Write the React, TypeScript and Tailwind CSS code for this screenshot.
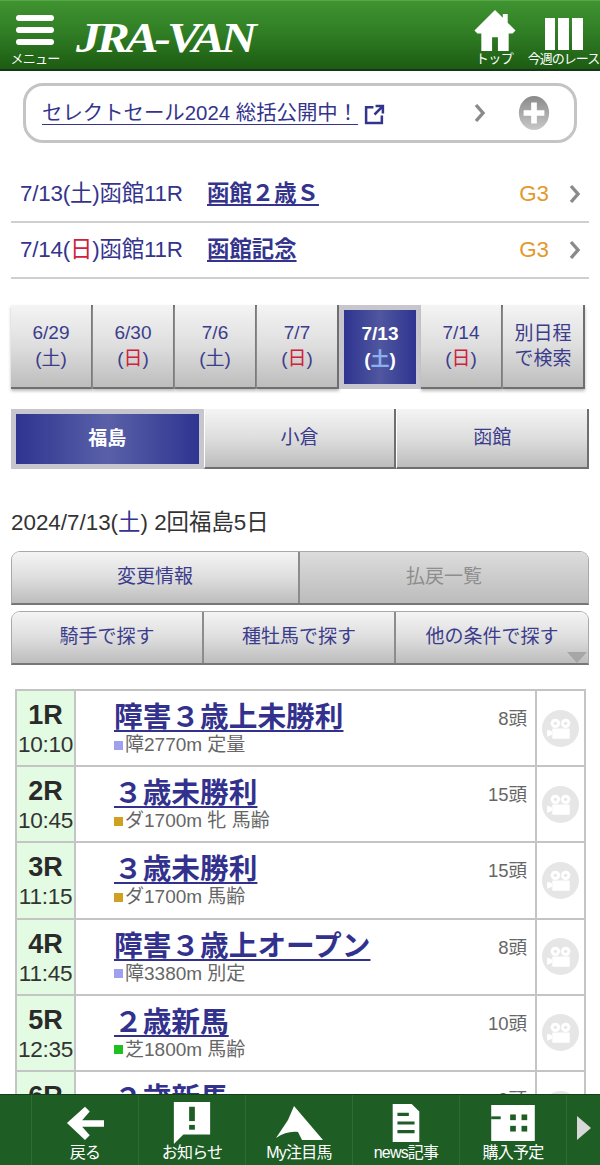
import React from 'react';

const FONT = 'font-["Liberation_Sans","Noto_Sans_CJK_JP",sans-serif]';

const dates = [
  { d: '6/29', w: '土' },
  { d: '6/30', w: '日' },
  { d: '7/6', w: '土' },
  { d: '7/7', w: '日' },
  { d: '7/13', w: '土', active: true },
  { d: '7/14', w: '日' },
];

const races = [
  { no: '1R', time: '10:10', title: '障害３歳上未勝利', info: '障2770m 定量', head: '8頭', mark: 'bg-[#a0a0f0]' },
  { no: '2R', time: '10:45', title: '３歳未勝利', info: 'ダ1700m 牝 馬齢', head: '15頭', mark: 'bg-[#d0a020]' },
  { no: '3R', time: '11:15', title: '３歳未勝利', info: 'ダ1700m 馬齢', head: '15頭', mark: 'bg-[#d0a020]' },
  { no: '4R', time: '11:45', title: '障害３歳上オープン', info: '障3380m 別定', head: '8頭', mark: 'bg-[#a0a0f0]' },
  { no: '5R', time: '12:35', title: '２歳新馬', info: '芝1800m 馬齢', head: '10頭', mark: 'bg-[#20c020]' },
  { no: '6R', time: '13:05', title: '２歳新馬', info: '芝1200m 馬齢', head: '9頭', mark: 'bg-[#20c020]' },
];

const btn = 'bg-gradient-to-b from-[#f4f4f4] via-[#dedede] to-[#bdbdbd]';

function Chevron({ className = '' }: { className?: string }) {
  return (
    <svg viewBox="0 0 12 20" className={className}>
      <path d="M2 2l7 8-7 8" fill="none" stroke="#8a8a8a" strokeWidth="3.4" />
    </svg>
  );
}

function CameraBadge() {
  return (
    <svg viewBox="0 0 36 36" className="w-[37px] h-[37px]">
      <circle cx="18" cy="18" r="18" fill="#e6e6e6" />
      <circle cx="13" cy="13" r="4.6" fill="#fff" />
      <circle cx="23" cy="13" r="4.6" fill="#fff" />
      <circle cx="13" cy="13" r="1.6" fill="#e6e6e6" />
      <circle cx="23" cy="13" r="1.6" fill="#e6e6e6" />
      <rect x="10" y="18" width="17" height="10" rx="1" fill="#fff" />
      <path d="M10 21l-5-2v7l5-2z" fill="#fff" />
    </svg>
  );
}

function Header() {
  return (
    <header className="h-[71px] shrink-0 flex items-stretch bg-gradient-to-b from-[#3f9330] via-[#2f7c24] to-[#1c5c12] border-t border-[#57a845] border-b-2 border-b-[#17351a] text-white">
      <div className="w-[70px] flex flex-col items-center pt-[14px]">
        <div className="w-[38px] flex flex-col gap-[6px]">
          <div className="h-[6px] rounded-[3px] bg-white" />
          <div className="h-[6px] rounded-[3px] bg-white" />
          <div className="h-[6px] rounded-[3px] bg-white" />
        </div>
        <span className="text-[13px] leading-none mt-[7px] tracking-[-0.8px]">メニュー</span>
      </div>
      <div className="flex-1 flex items-center pl-[6px]">
        <span className='font-["Liberation_Serif",serif] italic font-bold text-[42px] leading-none tracking-[-3.5px] scale-x-[1.18] origin-left pt-[5px]'>JRA-VAN</span>
      </div>
      <div className="w-[65px] flex flex-col items-center pt-[8px]">
        <svg viewBox="0 0 42 44" className="w-[42px] h-[43px]">
          <path d="M21 1L0 22l3 3h4v18h11V29h6v14h11V25h4l3-3-8-8V5h-5v4z" fill="#fff" />
        </svg>
        <span className="text-[13px] leading-none tracking-[-0.5px]">トップ</span>
      </div>
      <div className="w-[73px] flex flex-col items-center pt-[17px]">
        <div className="flex gap-[3px] h-[32px]">
          <div className="w-[10px] bg-white" />
          <div className="w-[11px] bg-white" />
          <div className="w-[11px] bg-white" />
        </div>
        <span className="text-[13px] leading-none mt-[2px] tracking-[-1px] whitespace-nowrap">今週のレース</span>
      </div>
    </header>
  );
}

function Banner() {
  return (
    <div className="mx-[23px] mt-[12px] h-[60px] rounded-[20px] border-[3px] border-[#c4c4c4] flex items-center pl-[16px] pr-[24px] bg-white">
      <a className="text-[20.4px] leading-none text-[#34348c] underline underline-offset-[4px] decoration-[1px]">セレクトセール2024 総括公開中！</a>
      <svg viewBox="0 0 20 20" className="w-[21px] h-[21px] ml-[6px] mt-[2px]">
        <path d="M9 3H2v15h15v-7M10 10l7-7M11 2h7v7" fill="none" stroke="#34348c" strokeWidth="2.4" />
      </svg>
      <Chevron className="w-[12px] h-[20px] ml-auto mr-[32px]" />
      <svg viewBox="0 0 32 36" className="w-[32px] h-[34px]">
        <defs>
          <linearGradient id="plus" x1="0" y1="0" x2="0" y2="1">
            <stop offset="0" stopColor="#8a8a8a" />
            <stop offset="1" stopColor="#c8c8c8" />
          </linearGradient>
        </defs>
        <ellipse cx="16" cy="18" rx="16" ry="18" fill="url(#plus)" />
        <path d="M16 7v22M5 18h22" stroke="#fff" strokeWidth="6" />
      </svg>
    </div>
  );
}

function GradeRow({ date, wd, sun, title }: { date: string; wd: string; sun?: boolean; title: string }) {
  return (
    <div className="mx-[11px] h-[56px] border-b-2 border-[#cfcfcf] flex items-center pl-[9px] text-[22.4px] text-[#34348c]">
      <span className="w-[187px] whitespace-nowrap tracking-[-0.2px]">
        {date}(<span className={sun ? 'text-[#d0203c]' : ''}>{wd}</span>)函館11R
      </span>
      <a className="font-bold underline underline-offset-[3px] text-[22.4px]">{title}</a>
      <span className="ml-auto text-[#e39a2b] text-[22.4px] mr-[20px]">G3</span>
      <Chevron className="w-[12px] h-[20px] mr-[8px]" />
    </div>
  );
}

function DateTabs() {
  return (
    <div className="mx-[11px] mt-[26px] h-[84px] grid grid-cols-7 w-[574px]">
      {dates.map(t =>
        t.active ? (
          <div key={t.d} className="bg-[#c6c6cc] p-[5px]">
            <div className="h-full flex flex-col items-center justify-center bg-gradient-to-r from-[#2f3490] via-[#50569f] to-[#2f3490] text-white text-[19px] leading-[26px]">
              <span className="font-bold">{t.d}</span>
              <span className="font-bold">(<span className="text-[#8ab0ee]">{t.w}</span>)</span>
            </div>
          </div>
        ) : (
          <div key={t.d} className={`${btn} border-r-2 border-b-2 border-[#6f6f6f] shadow-[0_2px_3px_#bbb] flex flex-col items-center justify-center text-[19px] leading-[26px] text-[#3c3c8c]`}>
            <span>{t.d}</span>
            <span>(<span className={t.w === '日' ? 'text-[#d0203c]' : ''}>{t.w}</span>)</span>
          </div>
        )
      )}
      <div className={`${btn} border-r-2 border-b-2 border-[#6f6f6f] shadow-[0_2px_3px_#bbb] flex flex-col items-center justify-center text-[19px] leading-[25px] text-[#3c3c8c]`}>
        <span>別日程</span>
        <span>で検索</span>
      </div>
    </div>
  );
}

function VenueTabs() {
  return (
    <div className="ml-[11px] mt-[20px] h-[60px] w-[578px] grid grid-cols-3">
      <div className="bg-[#c6c6cc] p-[5px]">
        <div className="h-full flex items-center justify-center bg-gradient-to-r from-[#2f3490] via-[#5a60a8] to-[#2f3490] text-white font-bold text-[19px]">福島</div>
      </div>
      {['小倉', '函館'].map(v => (
        <div key={v} className={`${btn} border-r-2 border-b-2 border-[#6f6f6f] border-l border-l-white flex items-center justify-center text-[19px] text-[#3c3c8c]`}>{v}</div>
      ))}
    </div>
  );
}

function SearchButtons() {
  return (
    <div className="mx-[11px] w-[578px] mt-[14px]">
      <div className="h-[54px] grid grid-cols-2 rounded-t-[9px] overflow-hidden border border-[#a8a8a8] border-b-2 border-b-[#777]">
        <div className={`${btn} flex items-center justify-center text-[19px] text-[#3c3c8c] border-r-2 border-[#8c8c8c]`}>変更情報</div>
        <div className="bg-gradient-to-b from-[#dcdcdc] to-[#bcbcbc] flex items-center justify-center text-[19px] text-[#8e8e8e]">払戻一覧</div>
      </div>
      <div className="h-[54px] mt-[6px] grid grid-cols-3 rounded-t-[9px] overflow-hidden border border-[#a8a8a8] border-b-2 border-b-[#777]">
        <div className={`${btn} flex items-center justify-center text-[19px] text-[#3c3c8c] border-r-2 border-[#8c8c8c]`}>騎手で探す</div>
        <div className={`${btn} flex items-center justify-center text-[19px] text-[#3c3c8c] border-r-2 border-[#8c8c8c]`}>種牡馬で探す</div>
        <div className={`${btn} relative flex items-center justify-center text-[19px] text-[#3c3c8c]`}>
          他の条件で探す
          <div className="absolute right-[1px] bottom-0 w-0 h-0 border-l-[10px] border-r-[10px] border-t-[11px] border-l-transparent border-r-transparent border-t-[#a6a6a6]" />
        </div>
      </div>
    </div>
  );
}

function RaceTable() {
  return (
    <div className="ml-[15px] mt-[24px] w-[571px] border-l-2 border-r-2 border-t-2 border-[#c4c4c4]">
      {races.map(r => (
        <div key={r.no} className="h-[76.2px] flex border-b-2 border-[#c4c4c4]">
          <div className="w-[59px] shrink-0 bg-[#e2fbe2] border-r-2 border-[#c4c4c4] flex flex-col items-center pt-[9px] text-[#2a2a2a]">
            <span className="text-[27px] leading-[30px] font-bold">{r.no}</span>
            <span className="text-[22.6px] leading-[29px] text-[#333] tracking-[-0.3px]">{r.time}</span>
          </div>
          <div className="flex-1 pl-[38px] pr-[8px] relative">
            <a className="block text-[28.7px] leading-[32px] mt-[10px] font-bold text-[#32328e] underline underline-offset-[3px] decoration-[2px] whitespace-nowrap">{r.title}</a>
            <div className="flex items-center text-[19px] leading-[22px] text-[#666] mt-[1px]">
              <span className={`w-[9px] h-[9px] mr-[2px] ${r.mark}`} />
              {r.info}
            </div>
            <span className="absolute right-[8px] top-[16px] text-[18.5px] leading-[24px] text-[#666]">{r.head}</span>
          </div>
          <div className="w-[49px] shrink-0 border-l-2 border-[#c4c4c4] flex items-center justify-center">
            <CameraBadge />
          </div>
        </div>
      ))}
    </div>
  );
}

function FooterItem({ label, children }: { label: string; children: React.ReactNode }) {
  return (
    <div className="w-[107px] border-r border-[#2c6d30] flex flex-col items-center justify-between pt-[8px] pb-[3px]">
      <div className="h-[40px] flex items-center justify-center">{children}</div>
      <span className="text-[16px] leading-[18px] tracking-[-0.8px] text-white whitespace-nowrap">{label}</span>
    </div>
  );
}

function Footer() {
  return (
    <footer className="h-[71px] shrink-0 flex bg-[#1e5e24] border-t border-[#143f18]">
      <div className="w-[32px] border-r border-[#2c6d30]" />
      <FooterItem label="戻る">
        <svg viewBox="0 0 40 40" className="w-[38px] h-[38px]">
          <path d="M20 3l5 5-8 9h23v7H17l8 9-5 5L1 20z" fill="#fff" />
        </svg>
      </FooterItem>
      <FooterItem label="お知らせ">
        <svg viewBox="0 0 38 44" className="w-[38px] h-[42px]">
          <path d="M0 0h38v34H10L0 44z" fill="#fff" />
          <rect x="16" y="5" width="6" height="15" fill="#1e5e24" />
          <rect x="16" y="24" width="6" height="5" fill="#1e5e24" />
        </svg>
      </FooterItem>
      <FooterItem label="My注目馬">
        <svg viewBox="0 0 47 34" className="w-[47px] h-[34px]">
          <path d="M18 0l29 34H26l-4-8c-7-1-15 1-22 6L12 14z" fill="#fff" />
        </svg>
      </FooterItem>
      <FooterItem label="news記事">
        <svg viewBox="0 0 28 40" className="w-[28px] h-[38px]">
          <path d="M0 0h20l8 8v32H0z" fill="#fff" />
          <path d="M5 11h12M5 20h18M5 29h18" stroke="#1e5e24" strokeWidth="3.4" />
        </svg>
      </FooterItem>
      <FooterItem label="購入予定">
        <svg viewBox="0 0 46 38" className="w-[46px] h-[36px]">
          <rect width="46" height="38" fill="#fff" />
          <rect x="0" y="12" width="10" height="3" fill="#1e5e24" />
          <rect x="20" y="10" width="6" height="6" fill="#1e5e24" />
          <rect x="32" y="10" width="6" height="6" fill="#1e5e24" />
          <rect x="20" y="22" width="6" height="6" fill="#1e5e24" />
          <rect x="32" y="22" width="6" height="6" fill="#1e5e24" />
        </svg>
      </FooterItem>
      <div className="flex-1 flex items-center justify-center pb-[4px]">
        <div className="w-0 h-0 border-y-[12px] border-l-[14px] border-y-transparent border-l-[#d8d8d8]" />
      </div>
    </footer>
  );
}

export default function App() {
  return (
    <div className={`${FONT} h-[1165px] w-[600px] flex flex-col overflow-hidden bg-white`}>
      <Header />
      <main className="flex-1 overflow-hidden">
        <Banner />
        <div className="mt-[24px]">
          <GradeRow date="7/13" wd="土" title="函館２歳Ｓ" />
          <GradeRow date="7/14" wd="日" sun title="函館記念" />
        </div>
        <DateTabs />
        <VenueTabs />
        <div className="ml-[11px] mt-[40px] h-[28px] text-[22.4px] leading-[28px] text-[#333]">
          2024/7/13(<span className="text-[#34348c]">土</span>) 2回福島5日
        </div>
        <SearchButtons />
        <RaceTable />
      </main>
      <Footer />
    </div>
  );
}
